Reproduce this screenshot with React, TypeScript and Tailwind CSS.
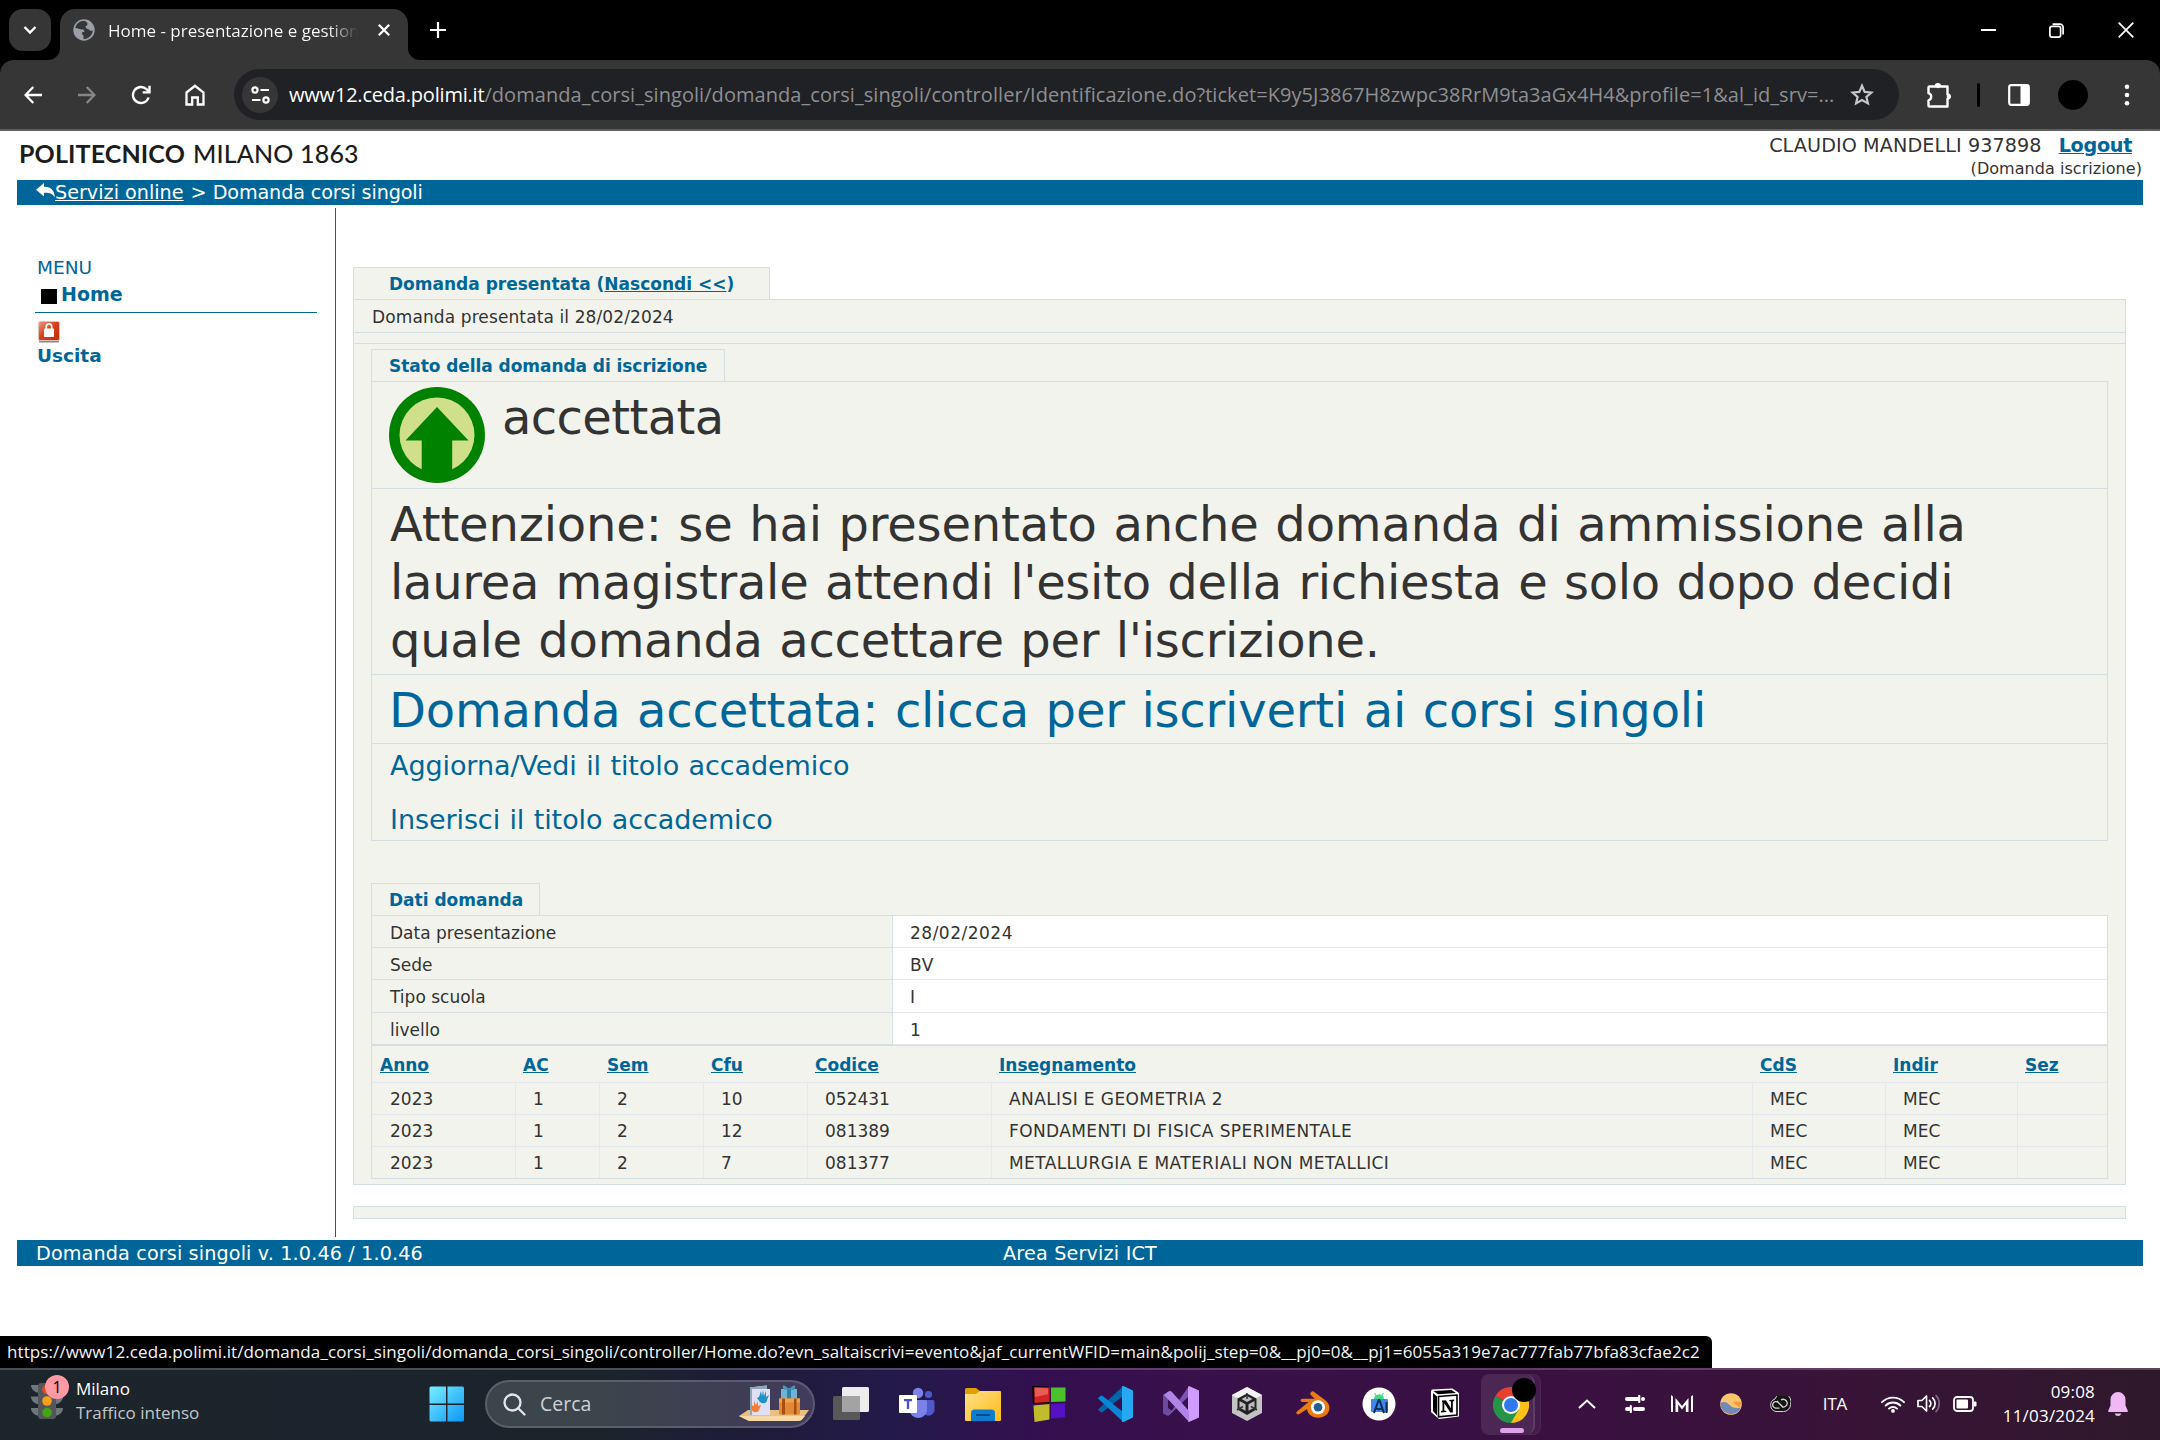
import type { ReactNode } from "react";

/* ---------- Browser chrome ---------- */

function TabStrip() {
  return (
    <div className="flex h-[60px] items-start bg-black pl-[9px] pt-[9px] text-white">
      <button className="flex h-[42px] w-[42px] items-center justify-center rounded-[14px] bg-[#363636]">
        <svg width="14" height="10" viewBox="0 0 14 10" fill="none" stroke="currentColor" strokeWidth="2.4">
          <path d="M1.5 2l5.5 5.5L12.500 2" />
        </svg>
      </button>
      <div className="relative ml-[9px] flex h-[51px] w-[348px] items-center rounded-t-[15px] bg-[#363636] pb-[9px] pl-[13px]">
        <svg className="absolute -left-3 bottom-0" width="12" height="12" viewBox="0 0 12 12">
          <path d="M12 0v12H0A12 12 0 0 0 12 0z" fill="#363636" />
        </svg>
        <svg className="absolute -right-3 bottom-0" width="12" height="12" viewBox="0 0 12 12">
          <path d="M0 0v12h12A12 12 0 0 1 0 0z" fill="#363636" />
        </svg>
        <svg width="22" height="22" viewBox="0 0 22 22">
          <circle cx="11" cy="11" r="10.700" fill="#9aa0a6" />
          <path
            d="M11.500 1.800c-4.600 0-8.200 2.800-9.200 7.200l4.800 1.200 3.400.3 1.200 2.300-2.300.1-.5 2 1.600 1.900.1 3.200c5-.1 9.200-4.200 9.200-9.100-1.400 1.500-3.200 1.200-3.600-.4l-2.500-.8-1.500-2.200 2.100-1.200.1-2.500z"
            fill="#363636"
          />
          <path d="M2.300 9l4.800 1.200 1 2.600L6.500 15l.4 2.800C4.100 16 2.200 13.500 2.300 9z" fill="#9aa0a6" />
        </svg>
        <span className="ml-[13px] mt-[2px] w-[250px] overflow-hidden whitespace-nowrap bg-linear-to-r from-white from-88% to-transparent bg-clip-text font-['Open_Sans',sans-serif] text-[17px] leading-6 text-transparent">
          Home - presentazione e gestione
        </span>
        <svg className="ml-5" width="12" height="12" viewBox="0 0 12 12" stroke="#fff" strokeWidth="2.200">
          <path d="M.8.8l10.400 10.400M11.200.8L.8 11.200" />
        </svg>
      </div>
      <svg className="ml-[22px] mt-[13px]" width="16" height="16" viewBox="0 0 16 16" stroke="#fff" strokeWidth="2.200">
        <path d="M8 0v16M0 8h16" />
      </svg>
      <div className="ml-auto flex items-center pr-[26px] pt-[13px]">
        <svg width="15" height="15" viewBox="0 0 15 15" stroke="#fff" strokeWidth="2">
          <path d="M0 7h15" />
        </svg>
        <svg className="ml-[53px]" width="15" height="15" viewBox="0 0 15 15" fill="none" stroke="#fff" strokeWidth="1.700">
          <rect x=".9" y="3.400" width="10.700" height="10.700" rx="2" />
          <path d="M3.600 1.200h7.200a3.300 3.300 0 0 1 3.300 3.300v7" />
        </svg>
        <svg className="ml-[54px]" width="16" height="16" viewBox="0 0 16 16" stroke="#fff" strokeWidth="1.700">
          <path d="M.7.700l14.600 14.600M15.300.7L.7 15.300" />
        </svg>
      </div>
    </div>
  );
}

function ToolButton({ children }: { children: ReactNode }) {
  return <button className="flex w-[54px] shrink-0 items-center justify-center">{children}</button>;
}

function Toolbar() {
  return (
    <div className="bg-black">
      <div className="flex h-[71px] items-center rounded-t-[14px] border-b-2 border-[#606060] bg-[#363636] pl-[6px] text-white">
        <ToolButton>
          <svg width="18" height="18" viewBox="0 0 18 18" fill="none" stroke="#fff" strokeWidth="2.300">
            <path d="M18 9H1.800M9.300 1L1.500 9l7.800 8" />
          </svg>
        </ToolButton>
        <ToolButton>
          <svg width="18" height="18" viewBox="0 0 18 18" fill="none" stroke="#868686" strokeWidth="2.300">
            <path d="M0 9h16.200M8.700 1l7.800 8-7.800 8" />
          </svg>
        </ToolButton>
        <ToolButton>
          <svg width="20" height="20" viewBox="0 0 20 20" fill="none" stroke="#fff" strokeWidth="2.400">
            <path d="M17.600 12.500A8 8 0 1 1 15.500 4.200L18 6.600" />
            <path d="M18.500.8v6.600h-6.800" />
          </svg>
        </ToolButton>
        <ToolButton>
          <svg width="20" height="22" viewBox="0 0 20 22" fill="none" stroke="#fff" strokeWidth="2.300">
            <path d="M1.500 8.500L10 1.800l8.500 6.700v12h-5.700v-7H7.200v7H1.500z" />
          </svg>
        </ToolButton>
        <div className="ml-3 flex h-[51px] w-[1665px] shrink-0 items-center rounded-full bg-[#202124] pl-2 font-['Open_Sans',sans-serif] text-[20px] leading-7">
          <div className="flex h-9 w-9 items-center justify-center rounded-full bg-[#363636]">
            <svg width="19" height="18" viewBox="0 0 19 18" fill="none" stroke="#fff" strokeWidth="2.200">
              <circle cx="4" cy="4" r="2.600" />
              <path d="M9.500 4H18M1 14h8.500" />
              <circle cx="15" cy="14" r="2.600" />
            </svg>
          </div>
          <span className="ml-[11px] whitespace-nowrap tracking-[-0.2px] text-white">www12.ceda.polimi.it</span>
          <span className="whitespace-nowrap tracking-[0.056px] text-[#8e8f92]">
            /domanda_corsi_singoli/domanda_corsi_singoli/controller/Identificazione.do?ticket=K9y5J3867H8zwpc38RrM9ta3aGx4H4&amp;profile=1&amp;al_id_srv=...
          </span>
          <svg className="ml-[16px] shrink-0" width="24" height="23" viewBox="0 0 24 23" fill="none" stroke="#c7c7c7" strokeWidth="2.200">
            <path d="M12 2.800l2.700 6.100 6.700.6-5 4.400 1.500 6.500L12 17l-5.900 3.400 1.500-6.500-5-4.400 6.700-.6z" />
          </svg>
        </div>
        <div className="ml-[13px] flex items-center">
          <ToolButton>
            <svg width="26" height="26" viewBox="0 0 26 26" fill="none" stroke="#fff" strokeWidth="2.400">
              <path d="M3.500 4.500h6.300a2.200 2.200 0 0 1 4.400 0h7.300v8a2.100 2.100 0 0 1 0 4.200v7.800H3.500a1 1 0 0 1-1-1v-5.200c3.600-.9 3.600-6.200 0-7.100V5.500a1 1 0 0 1 1-1z" strokeLinejoin="round" />
              <circle cx="12" cy="4" r="2.200" fill="#fff" stroke="none" />
              <circle cx="22.800" cy="14.600" r="2" fill="#fff" stroke="none" />
            </svg>
          </ToolButton>
          <div className="ml-[11px] h-6 w-[3px] rounded bg-black" />
          <div className="w-3" />
          <ToolButton>
            <svg width="22" height="22" viewBox="0 0 22 22">
              <rect x="1.200" y="1.200" width="19.600" height="19.600" rx="2" fill="none" stroke="#fff" strokeWidth="2.200" />
              <path d="M12.500 1h8v20h-8z" fill="#fff" />
            </svg>
          </ToolButton>
          <ToolButton>
            <span className="h-[30px] w-[30px] rounded-full bg-black" />
          </ToolButton>
          <ToolButton>
            <svg width="6" height="22" viewBox="0 0 6 22" fill="#fff">
              <circle cx="3" cy="2.700" r="2.300" />
              <circle cx="3" cy="11" r="2.300" />
              <circle cx="3" cy="19.300" r="2.300" />
            </svg>
          </ToolButton>
        </div>
      </div>
    </div>
  );
}

/* ---------- Page ---------- */

function PageHeader() {
  return (
    <>
      <header className="flex h-[49px] justify-between pl-[19px]">
        <div className="flex h-[44px] items-center gap-2 font-[Lato,sans-serif] text-[25px] leading-8 text-[#1c1c1c]">
          <span className="font-bold tracking-[0.12px]">POLITECNICO</span>
          <span className="font-medium tracking-[0.18px]">MILANO 1863</span>
        </div>
        <div className="flex flex-col items-end pr-[18px] pt-[3px]">
          <div className="flex gap-[17px] pr-[10px] text-[19.2px] leading-6 text-[#333]">
            <span className="tracking-[0.08px]">CLAUDIO MANDELLI 937898</span>
            <a className="font-bold tracking-[-0.3px] text-[#069] underline">Logout</a>
          </div>
          <span className="text-[16px] leading-[22px] tracking-[0.05px]">(Domanda iscrizione)</span>
        </div>
      </header>
      <nav className="mx-[17px] flex h-[25px] items-center bg-[#069] pl-[19px] text-[19.2px] leading-6 text-white">
        <svg width="19" height="15" viewBox="0 0 19 15" fill="#fff" className="mb-1">
          <path d="M8 0v3.800c6.500 0 10.500 3 10.800 10.600C16.800 10.800 14 9.600 8 9.700v3.900L0 6.800z" />
        </svg>
        <a className="underline">Servizi online</a>
        <span className="ml-[7px] mr-[6px]">&gt;</span>
        <span className="tracking-[-0.13px]">Domanda corsi singoli</span>
      </nav>
    </>
  );
}

function Sidebar() {
  return (
    <aside className="w-[319px] shrink-0 border-r border-[#069] pl-[18px] pt-12 text-[#069]">
      <div className="pl-[2px] text-[18.500px] leading-6">MENU</div>
      <div className="mt-[2px] flex h-[31px] w-[282px] items-start border-b border-[#069] pl-[6px] text-[19px] font-bold leading-6">
        <span className="mt-[7px] h-[15px] w-[16px] bg-black" />
        <span className="ml-[4px]">Home</span>
      </div>
      <svg className="ml-[3px] mt-[8px]" width="22" height="22" viewBox="0 0 22 22">
        <defs>
          <linearGradient id="lockRed" x1="0" y1="0" x2="1" y2="1">
            <stop offset="0" stopColor="#ef9d86" />
            <stop offset=".45" stopColor="#d8401c" />
            <stop offset="1" stopColor="#c22c0a" />
          </linearGradient>
        </defs>
        <rect x="1" y="18.500" width="20" height="3" rx="1" fill="#8c8782" />
        <rect x=".5" y=".5" width="21" height="19" rx="1.500" fill="url(#lockRed)" stroke="#d9c6bf" />
        <path d="M8.300 8V5.500a2.700 2.700 0 0 1 5.400 0V8" fill="none" stroke="#fff" strokeWidth="1.700" />
        <rect x="6" y="7.500" width="10" height="8.500" rx=".8" fill="#fff" />
      </svg>
      <div className="mt-px pl-[2px] text-[18.500px] font-bold leading-6">Uscita</div>
    </aside>
  );
}

function PanelTab({ children, className }: { children: ReactNode; className: string }) {
  return (
    <div className={`flex h-[32px] items-center border border-b-0 border-[#d5dfe3] bg-[#f2f3ec] font-bold text-[#069] ${className}`}>
      {children}
    </div>
  );
}

function AcceptedBadge() {
  return (
    <svg className="mt-[5px] shrink-0" width="96" height="96" viewBox="0 0 96 96">
      <circle cx="48" cy="48" r="48" fill="#008200" />
      <circle cx="48" cy="48" r="37.500" fill="#d0e08a" />
      <path d="M48 20l31.500 33.500H63.200V88H32.700V53.500H16.500z" fill="#008200" />
    </svg>
  );
}

function StatusBox() {
  return (
    <section>
      <PanelTab className="w-[354px] pl-[17px] tracking-[-0.06px]">Stato della domanda di iscrizione</PanelTab>
      <div className="border border-[#d5dfe3]">
        <div className="flex h-[107px] border-b border-[#d5dfe3] pl-[17px]">
          <AcceptedBadge />
          <span className="ml-[17px] pt-[6px] text-[48px] leading-[58px] tracking-[-0.62px]">accettata</span>
        </div>
        <div className="h-[186px] whitespace-nowrap border-b border-[#d5dfe3] pl-[18px] pt-[6px] text-[48px] leading-[58px] [word-spacing:1.6px]">
          <span className="tracking-[-0.18px]">Attenzione: se hai presentato anche domanda di ammissione alla</span>
          <br />
          <span className="tracking-[-0.3px]">laurea magistrale attendi l'esito della richiesta e solo dopo decidi</span>
          <br />
          <span className="tracking-[-0.28px]">quale domanda accettare per l'iscrizione.</span>
        </div>
        <div className="h-[69px] whitespace-nowrap border-b border-[#d5dfe3] pl-[17px] pt-[6px] text-[48px] leading-[58px] tracking-[-0.2px] text-[#069] [word-spacing:1.6px]">
          Domanda accettata: clicca per iscriverti ai corsi singoli
        </div>
        <div className="flex h-[96px] flex-col gap-5 pl-[18px] pt-[5px] text-[27px] leading-[34px] tracking-[-0.08px] text-[#069] [word-spacing:0.9px]">
          <a>Aggiorna/Vedi il titolo accademico</a>
          <a>Inserisci il titolo accademico</a>
        </div>
      </div>
    </section>
  );
}

const details = [
  { label: "Data presentazione", value: "28/02/2024" },
  { label: "Sede", value: "BV" },
  { label: "Tipo scuola", value: "I" },
  { label: "livello", value: "1" },
];

const columns = ["Anno", "AC", "Sem", "Cfu", "Codice", "Insegnamento", "CdS", "Indir", "Sez"];
const courses = [
  ["2023", "1", "2", "10", "052431", "ANALISI E GEOMETRIA 2", "MEC", "MEC", ""],
  ["2023", "1", "2", "12", "081389", "FONDAMENTI DI FISICA SPERIMENTALE", "MEC", "MEC", ""],
  ["2023", "1", "2", "7", "081377", "METALLURGIA E MATERIALI NON METALLICI", "MEC", "MEC", ""],
];
const gridCols = "grid grid-cols-[143px_84px_104px_104px_184px_761px_133px_132px_1fr]";

function DetailsBox() {
  return (
    <section className="mt-[42px]">
      <PanelTab className="w-[169px] pl-[17px] pt-px">Dati domanda</PanelTab>
      <div className="border border-b-0 border-[#d5dfe3]">
        {details.map((d, i) => (
          <div key={d.label} className={`flex ${i === 2 ? "h-[33px]" : "h-[32px]"}`}>
            <div className="flex w-[521px] items-center border-b border-r border-[#d5dfe3] pl-[18px] pt-[2px]">{d.label}</div>
            <div className="flex flex-1 items-center border-b border-[#e4e8ee] bg-white pl-[17px] pt-[2px] tracking-[0.5px]">{d.value}</div>
          </div>
        ))}
      </div>
      <div className="border border-[#d5dfe3]">
        <div className={`h-[37px] items-center border-b border-[#e4e8ee] pt-px font-bold text-[#069] ${gridCols}`}>
          {columns.map((c) => (
            <a key={c} className="pl-2 underline">
              {c}
            </a>
          ))}
        </div>
        {courses.map((row, r) => (
          <div key={r} className={`${gridCols} ${r < 2 ? "h-[32px] border-b border-[#e4e8ee]" : "h-[31px]"}`}>
            {row.map((cell, c) => (
              <span
                key={c}
                className={`flex items-center pt-px ${c > 0 ? "border-l border-[#e4e8ee] pl-[17px]" : "pl-[18px]"} ${c === 5 ? "tracking-[0.4px]" : ""}`}
              >
                {cell}
              </span>
            ))}
          </div>
        ))}
      </div>
    </section>
  );
}

function Content() {
  return (
    <main className="ml-[17px] w-[1773px] pt-[59px] text-[17px] leading-6">
      <PanelTab className="w-[417px] pl-[35px]">
        Domanda presentata (<a className="underline">Nascondi &lt;&lt;</a>)
      </PanelTab>
      <div className="border border-[#d5dfe3] bg-[#f2f3ec]">
        <div className="flex h-[33px] items-center border-b border-[#d5dfe3] pl-[18px] pt-[2px] tracking-[0.11px]">
          Domanda presentata il 28/02/2024
        </div>
        <div className="h-[11px] border-b border-[#d5dfe3]" />
        <div className="px-[17px] pb-[5px] pt-[5px]">
          <StatusBox />
          <DetailsBox />
        </div>
      </div>
      <div className="mt-[21px] h-[13px] border border-[#d5dfe3] bg-[#f2f3ec]" />
    </main>
  );
}

function Page() {
  return (
    <div className="relative h-[1237px] overflow-hidden bg-white font-['DejaVu_Sans',Verdana,sans-serif] text-[#333]">
      <PageHeader />
      <div className="mt-[3px] flex h-[1029px] pl-[17px]">
        <Sidebar />
        <Content />
      </div>
      <footer className="mx-[17px] mt-[3px] flex h-[26px] items-center bg-[#069] pl-[19px] pt-[2px] text-[19.2px] leading-6 text-white">
        <span className="w-[967px] tracking-[0.13px]">Domanda corsi singoli v. 1.0.46 / 1.0.46</span>
        <span className="tracking-[0.18px]">Area Servizi ICT</span>
      </footer>
      <div className="absolute bottom-0 left-0 flex h-[32px] w-[1712px] items-center whitespace-nowrap rounded-tr-[6px] bg-black pl-[7px] font-['Open_Sans',sans-serif] text-[17px] leading-6 tracking-[0.1px] text-[#f5f5f5]">
        https://www12.ceda.polimi.it/domanda_corsi_singoli/domanda_corsi_singoli/controller/Home.do?evn_saltaiscrivi=evento&amp;jaf_currentWFID=main&amp;polij_step=0&amp;__pj0=0&amp;__pj1=6055a319e7ac777fab77bfa83cfae2c2
      </div>
    </div>
  );
}

/* ---------- Taskbar ---------- */

function TrafficWidget() {
  return (
    <div className="flex w-[414px] items-start pl-[31px] pt-[6px]">
      <div className="relative">
        <svg width="32" height="45" viewBox="0 0 32 45">
          <path d="M0 9h8v8C3 16 0 13 0 9zM32 9h-8v8c5-1 8-4 8-8zM0 20.500h8v8c-5-1-8-4-8-8zM32 20.500h-8v8c5-1 8-4 8-8zM0 32h8v8c-5-1-8-4-8-8zM32 32h-8v8c5-1 8-4 8-8z" fill="#6f767c" />
          <rect x="7" y="7" width="18" height="36" rx="3" fill="#53575b" />
          <circle cx="16" cy="13.500" r="4.800" fill="#e8491d" />
          <circle cx="16" cy="25" r="4.800" fill="#f9a01b" />
          <circle cx="16" cy="36.500" r="4.800" fill="#43a317" />
        </svg>
        <span className="absolute -top-px left-[14px] flex h-6 w-6 items-center justify-center rounded-full bg-[#ff99a4] text-[16px] leading-6 text-black">1</span>
      </div>
      <div className="ml-[13px] mt-px text-[17px] leading-6">
        <div className="text-white">Milano</div>
        <div className="text-[#c3c6c9]">Traffico intenso</div>
      </div>
    </div>
  );
}

function StartIcon() {
  return (
    <svg width="36" height="36" viewBox="0 0 36 36">
      <defs>
        <linearGradient id="startBlue" x1="0" y1="0" x2="36" y2="36" gradientUnits="userSpaceOnUse">
          <stop offset="0" stopColor="#7af0ff" />
          <stop offset="1" stopColor="#0a94f8" />
        </linearGradient>
      </defs>
      <path d="M2 .5h15v17H.5V2A1.500 1.500 0 0 1 2 .5zM18.500.5h15A1.500 1.500 0 0 1 35 2v15.500H18.500zM.5 19H17v16.500H2A1.500 1.500 0 0 1 .5 34zM18.500 19H35v15a1.500 1.500 0 0 1-1.500 1.500h-15z" fill="url(#startBlue)" />
    </svg>
  );
}

function SearchDoodle() {
  return (
    <svg width="70" height="38" viewBox="0 0 70 38">
      <path d="M0 31l9-6h61l-7 9.500-4 1.500H10z" fill="#e9c083" />
      <path d="M0 31h66l-4 4.500-3 .5H10z" fill="#f6d9a6" />
      <path d="M11 2.500l17-2v3.500h3v26H11z" fill="#dfe0f5" />
      <path d="M11 2.500l17-2V4H13v26h-2z" fill="#8fa9b8" />
      <path d="M20 12l2-6 1 5 1-6 1 6 2-5v6l3-2-2 5c0 4-5 4-7 2l-3-4z" fill="#1d93c4" />
      <path d="M12 20l3 1v-5l2 4 2-4v5l3-1-2 5c-1 3-6 3-7 0z" fill="#ef7f33" />
      <rect x="42" y="4" width="16" height="12" fill="#6fb4d2" />
      <rect x="48" y="3" width="4" height="13" fill="#2f7fa8" />
      <path d="M50 4c-5-5-7-4-6-1s4 2 6 1c2 1 5 2 6-1s-1-4-6 1z" fill="#4b93bb" />
      <rect x="40" y="13.500" width="21" height="16" fill="#e08a35" />
      <rect x="40" y="13.500" width="21" height="4" fill="#f0a24d" />
      <path d="M43 13.500h3v16h-3zM55 13.500h2.500v16H55z" fill="#a84e10" />
    </svg>
  );
}

const TaskViewIcon = () => (
  <svg width="36" height="36" viewBox="0 0 36 36">
    <rect x="0" y="10" width="27" height="24" rx="1.500" fill="#585858" />
    <rect x="9" y="1" width="27" height="25" rx="1.500" fill="#ececec" />
    <path d="M9 10h18v16H9z" fill="#a3a3a3" />
  </svg>
);

const TeamsIcon = () => (
  <svg width="36" height="36" viewBox="0 0 36 36">
    <circle cx="29.500" cy="8.500" r="3.600" fill="#5059c9" />
    <path d="M25 14h9a1.500 1.500 0 0 1 1.500 1.500V23a6 6 0 0 1-10 5z" fill="#5059c9" />
    <circle cx="19" cy="7" r="5.200" fill="#7b83eb" />
    <path d="M12 14h14.500a1.500 1.500 0 0 1 1.500 1.500V25a9 9 0 0 1-17.500 0z" fill="#7b83eb" />
    <rect x="0" y="9" width="18" height="18" rx="1" fill="#fff" />
    <path d="M5 13h8v2.200h-2.800V23H7.800v-7.800H5z" fill="#4b53bc" />
  </svg>
);

const ExplorerIcon = () => (
  <svg width="36" height="36" viewBox="0 0 36 36">
    <defs>
      <linearGradient id="folder" x1="0" y1="0" x2="1" y2="1">
        <stop offset="0" stopColor="#ffe08a" />
        <stop offset="1" stopColor="#fcbb14" />
      </linearGradient>
    </defs>
    <path d="M0 3.500A1.500 1.500 0 0 1 1.500 2H11l4 3v5H0z" fill="#e0a000" />
    <path d="M0 8h11l4-3h20a1 1 0 0 1 1 1v28a1 1 0 0 1-1 1H1a1 1 0 0 1-1-1z" fill="url(#folder)" />
    <path d="M6 35V27a3.500 3.500 0 0 1 3.500-3.500h17A3.500 3.500 0 0 1 30 27v8z" fill="#0d7cd0" />
    <path d="M11 29h14" stroke="#0a4a86" strokeWidth="2" />
  </svg>
);

const BlocksIcon = () => (
  <svg width="36" height="38" viewBox="0 0 36 38">
    <path d="M1 1l17 .5V18l-16 .5z" fill="#000" />
    <path d="M3 2l15.500.4V17L3.500 18z" fill="#d42520" />
    <path d="M20 2.500l14.500 0V16.500L20 17z" fill="#4bc22c" />
    <path d="M2.500 20.500L18.500 19v15.500L3.500 37z" fill="#c2bb2c" />
    <path d="M20 19l14-.8v14L20 33.500z" fill="#5512c4" />
    <path d="M4 3l13 .3v6L4 12z" fill="#f0857b" opacity=".6" />
  </svg>
);

const VsCodeIcon = () => (
  <svg width="36" height="36" viewBox="0 0 36 36">
    <path d="M.8 23.700l2.600 2.400a1.500 1.500 0 0 0 1.900.1L34 4.500 26 .3z" fill="#0065a9" />
    <path d="M.8 12.300l2.600-2.400a1.500 1.500 0 0 1 1.900-.1L34 31.500 26 35.700z" fill="#0a86d6" />
    <path d="M26.500 0L36 4.500v27L26.500 36c-1 .3-1.500-.3-1.500-1V1c0-.7.5-1.300 1.500-1z" fill="#27a9f2" />
    <path d="M25 11v14l-9-7z" fill="#37104b" />
  </svg>
);

const VisualStudioIcon = () => (
  <svg width="36" height="36" viewBox="0 0 36 36">
    <path d="M0 8.500L5 6l5 4.500L5 14v8l5 3.500L5 30l-5-2.500z" fill="#6b4aa0" />
    <path d="M5 30L26 0v10L10 25.500z" fill="#7a55b3" />
    <path d="M26 0l10 4.500v27L26 36l-1-1V1z" fill="#cf9bff" />
    <path d="M1 9l4-3.200a3 3 0 0 1 4 .2L26 25v11z" fill="#b083e6" />
  </svg>
);

const UnityIcon = () => (
  <svg width="30" height="34" viewBox="0 0 30 34">
    <path d="M15 0l15 8v18l-15 8L0 26V8z" fill="#c3c3c3" />
    <path d="M15 0l15 8-15 8.500L0 8z" fill="#f2f2f2" />
    <path d="M15 6.500l9.500 5v11L15 28l-9.500-5.500v-11z" fill="#222" />
    <path d="M15 9l5.500 3-5.500 3-5.500-3zM7.500 14l6 3.300v6.500l-6-3.400zM22.500 14v6.400l-6 3.400v-6.500z" fill="#bcbcbc" />
    <path d="M15 6v6M5 23l6-3.500M25 23l-6-3.500" stroke="#333" strokeWidth="1.500" />
  </svg>
);

const BlenderIcon = () => (
  <svg width="34" height="27" viewBox="0 0 34 27">
    <path d="M15 1.200c1-1.200 2.500-1 3.500 0L29 9c3 2.300 4.500 4.800 4.500 8 0 5.500-5 9.700-11.500 9.700-6 0-10.500-3.600-11-8.700L3.500 23c-2 1.500-4.500-.8-2.500-2.500L12.500 11H6.500c-2.500 0-2.500-3.300 0-3.300h12.300L15 4.200c-1-.8-1-2 0-3z" fill="#ea7b12" />
    <circle cx="22" cy="16.300" r="7" fill="#fff" />
    <circle cx="22" cy="16.300" r="4.300" fill="#225b8c" />
  </svg>
);

const AndroidStudioIcon = () => (
  <svg width="34" height="34" viewBox="0 0 34 34">
    <circle cx="17" cy="17" r="16.500" fill="#fff" />
    <rect x="9" y="12" width="17" height="13" rx="1" fill="#3f86f0" />
    <path d="M12 12c0-6 10-6 10 0z" fill="#3ddc84" />
    <path d="M12.500 6l2 3M21.500 6l-2 3" stroke="#3ddc84" strokeWidth="1.200" />
    <path d="M17 12l-5 14M17 12l5 14M13.500 21q3.500 2.500 7 0" stroke="#0b2d4d" strokeWidth="2" fill="none" />
    <path d="M24.500 15v11" stroke="#0b2d4d" strokeWidth="2" />
  </svg>
);

const NotionIcon = () => (
  <svg width="30" height="32" viewBox="0 0 30 32">
    <path d="M2 1.500L22.500.5 29 5v23.500L9 31l-8-7V3z" fill="#fff" />
    <path d="M3.500 3l18-1L26 5 8 6.300zM3 5l4 3.500v19L3 23z" fill="#000" />
    <path d="M8.500 8.500L27 7v20L8.500 28.800z" fill="#fff" stroke="#000" strokeWidth="1.600" />
    <path d="M12 12.500l4-.3 5 8.300v-7l-1.700-.4v-1.200l5-.3v1.200l-1.500.6v11l-2.500.2-6-9.300v7.300l2 .4V24l-5.300.4v-1.200l1.500-.6v-8.700L12 13.700z" fill="#000" />
  </svg>
);

const ChromeIcon = () => (
  <svg width="36" height="36" viewBox="0 0 36 36">
    <path d="M18 18L2.400 9A18 18 0 0 1 33.600 9z" fill="#e8402f" />
    <path d="M18 18h0L33.600 9A18 18 0 0 1 18 36z" fill="#fcc21a" />
    <path d="M18 18v0l7.800 4.500L18 36A18 18 0 0 1 2.400 9z" fill="#269447" />
    <path d="M18 9.500h15.900L18 18z" fill="#e8402f" />
    <circle cx="18" cy="18" r="9" fill="#fff" />
    <circle cx="18" cy="18" r="7" fill="#3079ec" />
  </svg>
);

const apps = [TaskViewIcon, TeamsIcon, ExplorerIcon, BlocksIcon, VsCodeIcon, VisualStudioIcon, UnityIcon, BlenderIcon, AndroidStudioIcon, NotionIcon];

function TraySlot({ className, children }: { className: string; children: ReactNode }) {
  return <div className={`flex shrink-0 items-center justify-center ${className}`}>{children}</div>;
}

function Tray() {
  return (
    <div className="ml-[25px] flex items-center pb-[3px] text-white">
      <TraySlot className="w-[36px]">
        <svg width="18" height="10" viewBox="0 0 18 10" fill="none" stroke="#fff" strokeWidth="2">
          <path d="M1 9l8-7.500L17 9" />
        </svg>
      </TraySlot>
      <TraySlot className="w-[60px]">
        <svg width="20" height="18" viewBox="0 0 20 18" fill="none" stroke="#fff" strokeWidth="4" strokeLinecap="round">
          <path d="M2 4h11M18 4h0M2 14h2M10 14h8" />
          <path d="M14.200 1v6M5.800 11v6" strokeWidth="2.200" />
        </svg>
      </TraySlot>
      <TraySlot className="w-[33px]">
        <svg width="22" height="17" viewBox="0 0 22 17" fill="#fff">
          <path d="M0 0l2 1.500V17H0zM22 0l-2 1.500V17h2zM4.500 3l6.500 8 6.500-8v14h-2.700V9.500L11 14.500 7.200 9.500V17H4.500z" />
        </svg>
      </TraySlot>
      <TraySlot className="w-[66px]">
        <svg width="22" height="22" viewBox="0 0 22 22">
          <circle cx="11" cy="11" r="10.800" fill="#f9c56f" />
          <path d="M13 9.500c2-1.500 5-1.500 8.500 0l-2 5z" fill="#f39a3a" />
          <path d="M.3 10c3-1.700 6-1.500 8.700 1.500 3 3 6 4.200 11.900 3.300A10.800 10.800 0 0 1 .3 10z" fill="#7189b8" />
        </svg>
      </TraySlot>
      <TraySlot className="w-[31px]">
        <svg width="22" height="16" viewBox="0 0 22 16" fill="none">
          <path d="M7 15.500a6.500 6.500 0 0 1-1-12.500 8 8 0 0 1 15.500 5.500 7 7 0 0 1-7 7z" fill="#141414" stroke="#d5d5d5" />
          <path d="M14.500 11.500L9 6.200a3.300 3.300 0 1 0-2.500 5.900h4M8 5l5.500 6a3.900 3.900 0 1 0-1.500-7" stroke="#d5d5d5" strokeWidth="1.300" />
        </svg>
      </TraySlot>
      <TraySlot className="w-[80px] pt-px text-[17px] tracking-[-0.2px]">ITA</TraySlot>
      <TraySlot className="w-[36px]">
        <svg width="24" height="18" viewBox="0 0 24 18" fill="none" stroke="#fff" strokeWidth="1.900" strokeLinecap="round">
          <path d="M1 7.200a15.500 15.500 0 0 1 22 0M4.600 10.600a10.500 10.500 0 0 1 14.800 0M8 13.600a5.800 5.800 0 0 1 8 0" />
          <circle cx="12" cy="15.900" r="1.900" fill="#fff" stroke="none" />
        </svg>
      </TraySlot>
      <TraySlot className="w-[36px]">
        <svg width="24" height="19" viewBox="0 0 24 19" fill="none" stroke="#fff" strokeWidth="1.700" strokeLinecap="round" strokeLinejoin="round">
          <path d="M1 6.500h3.800L9.500 2v15l-4.700-4.500H1zM12.500 6.500a4 4 0 0 1 0 6M15.700 3.800a8 8 0 0 1 0 11.400" />
          <path d="M19 1.300a12 12 0 0 1 0 16.400" opacity=".35" />
        </svg>
      </TraySlot>
      <TraySlot className="w-[36px]">
        <svg width="24" height="16" viewBox="0 0 24 16">
          <rect x="1" y="1" width="19" height="14" rx="3" fill="none" stroke="#fff" strokeWidth="1.800" />
          <rect x="3.500" y="3.500" width="11.500" height="9" rx="1" fill="#fff" />
          <path d="M21 5.500h1.500a1 1 0 0 1 1 1v3a1 1 0 0 1-1 1H21z" fill="#fff" />
        </svg>
      </TraySlot>
      <div className="w-[112px] text-right text-[17px] leading-6 tracking-[0.2px]">
        <div>09:08</div>
        <div>11/03/2024</div>
      </div>
      <TraySlot className="ml-[5px] w-[36px] pt-px">
        <svg width="20" height="25" viewBox="0 0 20 25" fill="#f0b9f5">
          <path d="M10 0a7.500 7.500 0 0 1 7.500 7.500v6l2.300 5.200c.2.700-.2 1.300-1 1.300H1.200c-.8 0-1.200-.6-1-1.300l2.300-5.200v-6A7.500 7.500 0 0 1 10 0zM6.700 21.500h6.600a3.400 3.400 0 0 1-6.600 0z" />
        </svg>
      </TraySlot>
    </div>
  );
}

function Taskbar() {
  return (
    <div className="flex h-[72px] border-t-2 border-white/20 bg-[linear-gradient(90deg,#1b252b_0%,#1b242d_28%,#1e1c38_34%,#24194a_42%,#330f50_48%,#38104a_55%,#3a1042_70%,#391338_85%,#2e182b_100%)] bg-origin-border font-['Open_Sans',sans-serif]">
      <TrafficWidget />
      <div className="flex w-[66px] items-center justify-center pb-[2px]">
        <StartIcon />
      </div>
      <div className="ml-[5px] mt-[10px] flex h-[48px] w-[330px] items-center rounded-full border-2 border-white/15 bg-white/15 pl-[16px]">
        <svg width="23" height="23" viewBox="0 0 23 23" fill="none" stroke="#e3e6e8" strokeWidth="2.300" strokeLinecap="round">
          <circle cx="9.500" cy="9.500" r="8" />
          <path d="M15.500 15.500l6 6" />
        </svg>
        <span className="ml-[14px] text-[19.500px] leading-7 text-[#ced0d6]">Cerca</span>
        <div className="ml-auto mr-[4px]">
          <SearchDoodle />
        </div>
      </div>
      <div className="ml-[3px] flex">
        {apps.map((Icon, i) => (
          <div key={i} className="flex w-[66px] items-center justify-center pb-[2px]">
            <Icon />
          </div>
        ))}
        <div className="flex w-[66px] items-start justify-start pl-[3px] pt-[4px]">
          <div className="w-[60px] rounded-[8px] border border-white/5 bg-white/5">
            <div className="relative flex h-[59px] w-[53px] items-center justify-center rounded-[8px] border-r-2 border-white/10 bg-white/5 pl-[6px]">
              <ChromeIcon />
              <span className="absolute right-[-3px] top-[3px] h-6 w-6 rounded-full bg-black" />
              <span className="absolute bottom-px left-[18px] h-[5px] w-6 rounded-full bg-[#dda2e8]" />
            </div>
          </div>
        </div>
      </div>
      <Tray />
    </div>
  );
}

export default function App() {
  return (
    <div className="h-[1440px] w-[2160px] overflow-hidden bg-black">
      <TabStrip />
      <Toolbar />
      <Page />
      <Taskbar />
    </div>
  );
}
